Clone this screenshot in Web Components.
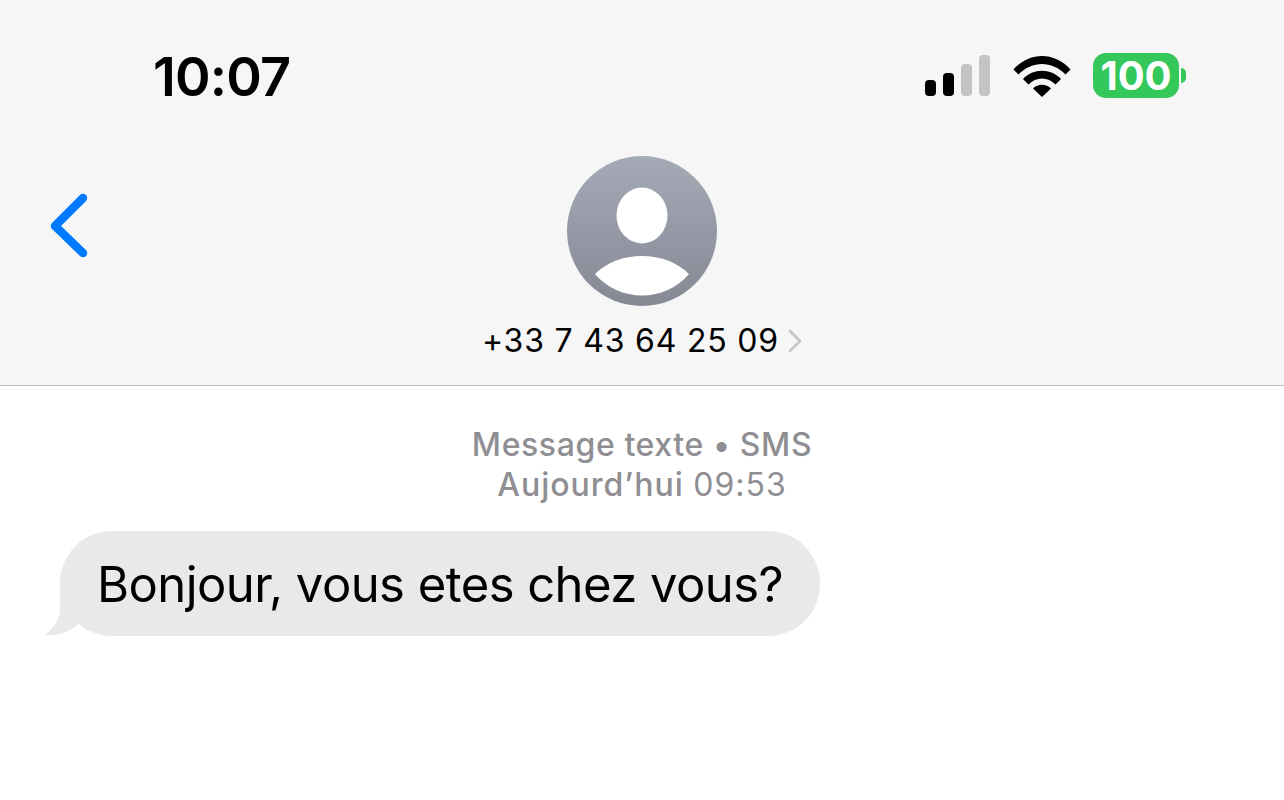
<!DOCTYPE html>
<html lang="fr">
<head>
<meta charset="utf-8">
<title>Messages</title>
<style>
  html, body { margin: 0; height: 100%; background: #fff; }
  body { font-family: Inter, "Liberation Sans", sans-serif; overflow: hidden; }
  thread-meta time { font-weight: 400; }
  thread-meta span + span { letter-spacing: 1px; }
</style>
</head>
<body>
<sms-screen>
  <status-bar slot="header" time="10:07" battery="100"></status-bar>
  <contact-nav slot="header" name="+33 7 43 64 25 09"></contact-nav>
  <thread-meta>
    <span>Message texte • SMS</span>
    <span>Aujourd’hui <time>09:53</time></span>
  </thread-meta>
  <message-bubble>Bonjour, vous etes chez vous?</message-bubble>
</sms-screen>

<script>
class SmsScreen extends HTMLElement {
    constructor() {
        super()
        this.attachShadow({ mode: 'open' })
        this.shadowRoot.innerHTML = `
<style>
  :host { display: flex; flex-direction: column; width: 1284px; height: 800px; }
  header { height: 385px; background: #f6f6f7; border-bottom: 1px solid #bdbdbf; display: flex; flex-direction: column; }
  main { flex: 1; padding-top: 39px; display: flex; flex-direction: column; }
</style>
<header><slot name="header"></slot></header>
<main><slot></slot></main>`
    }
}

class StatusBar extends HTMLElement {
    constructor() {
        super()
        this.attachShadow({ mode: 'open' })
        this.shadowRoot.innerHTML = `
<style>
  :host { display: flex; align-items: center; height: 156px; padding: 0 105px 0 153px; box-sizing: border-box; color: #000; }
  .time { font-size: 54px; font-weight: 600; letter-spacing: -0.8px; flex: 1; line-height: 60px; margin-top: -3px; }
  .icons { display: flex; align-items: center; margin-top: -5px; }
  .signal { display: block; margin-right: 23px; }
  .wifi { display: block; margin-right: 22px; }
  .battery { position: relative; display: flex; align-items: center; justify-content: center; width: 86px; height: 45px; border-radius: 13px; background: #34c759; color: #fff; font-size: 40px; font-weight: 700; letter-spacing: 0; line-height: 45px; }
  .battery::after { content: ''; position: absolute; left: 88px; top: 15px; width: 5px; height: 15px; background: #34c759; border-radius: 0 8px 8px 0; }
</style>
<div class="time"></div>
<div class="icons">
  <svg class="signal" width="66" height="42" viewBox="0 0 66 42">
    <rect x="1" y="25" width="11" height="16" rx="4" fill="#000"/>
    <rect x="19" y="18" width="11" height="23" rx="4" fill="#000"/>
    <rect x="37" y="9" width="11" height="32" rx="4" fill="#c4c4c5"/>
    <rect x="55" y="0" width="11" height="41" rx="4" fill="#c4c4c5"/>
  </svg>
  <svg class="wifi" width="58" height="42" viewBox="0 0 58 42">
    <path d="M0.5 14.5 C16.5 -3.5 41.5 -3.5 57.5 14.5 L52.5 19.5 C39 5.5 19 5.5 5.5 19.5 Z" fill="#000"/>
    <path d="M10 24 C20 13 38 13 48 24 L42.5 29.5 C35 21.5 23 21.5 15.5 29.5 Z" fill="#000"/>
    <path d="M20 33.5 C25 28.5 33 28.5 38 33.5 L29 42 Z" fill="#000"/>
  </svg>
  <div class="battery"></div>
</div>`
        this.shadowRoot.querySelector('.time').textContent = this.getAttribute('time')
        this.shadowRoot.querySelector('.battery').textContent = this.getAttribute('battery')
    }
}

class ContactNav extends HTMLElement {
    constructor() {
        super()
        this.attachShadow({ mode: 'open' })
        this.shadowRoot.innerHTML = `
<style>
  :host { display: grid; grid-template-columns: 1fr auto 1fr; align-items: start; }
  .back { display: block; margin: 37px 0 0 48px; }
  .contact { display: flex; flex-direction: column; align-items: center; }
  .avatar { display: block; }
  .name { display: flex; align-items: center; margin-top: 16px; font-size: 32px; line-height: 38px; color: #000; white-space: nowrap; letter-spacing: 0.8px; }
  .name svg { margin-left: 9px; }
</style>
<svg class="back" width="42" height="66" viewBox="0 0 42 66">
  <path d="M35 5 L7 33 L35 60" fill="none" stroke="#007aff" stroke-width="8.5" stroke-linecap="round" stroke-linejoin="round"/>
</svg>
<div class="contact">
  <svg class="avatar" width="150" height="150" viewBox="0 0 150 150">
    <defs>
      <linearGradient id="avatarFill" x1="0" y1="0" x2="0" y2="1">
        <stop offset="0" stop-color="#a5aab7"/>
        <stop offset="1" stop-color="#858994"/>
      </linearGradient>
    </defs>
    <circle cx="75" cy="75" r="75" fill="url(#avatarFill)"/>
    <ellipse cx="75" cy="59.5" rx="25.5" ry="28" fill="#fff"/>
    <path d="M28 118 C40 106 57 100 75 100 C93 100 110 106 122 118 C110 132 93 139.5 75 139.5 C57 139.5 40 132 28 118 Z" fill="#fff"/>
  </svg>
  <div class="name"><span></span><svg width="14" height="26" viewBox="0 0 14 26"><path d="M2 3 L12 13 L2 23" fill="none" stroke="#c5c5c7" stroke-width="2.6" stroke-linecap="round" stroke-linejoin="round"/></svg></div>
</div>
<div></div>`
        this.shadowRoot.querySelector('.name span').textContent = this.getAttribute('name')
    }
}

class ThreadMeta extends HTMLElement {
    constructor() {
        super()
        this.attachShadow({ mode: 'open' })
        this.shadowRoot.innerHTML = `
<style>
  :host { display: flex; flex-direction: column; align-items: center; font-size: 32px; line-height: 40px; color: #8e8e93; font-weight: 500; letter-spacing: 0.6px; }
  ::slotted(span) { display: block; white-space: nowrap; }
</style>
<slot></slot>`
    }
}

class MessageBubble extends HTMLElement {
    constructor() {
        super()
        this.attachShadow({ mode: 'open' })
        this.shadowRoot.innerHTML = `
<style>
  :host { display: flex; margin: 26px 0 0 60px; }
  .bubble { position: relative; box-sizing: border-box; height: 105px; padding: 2px 37px 0; display: flex; align-items: center; border-radius: 52px; background: #e9e9eb; color: #000; font-size: 49px; letter-spacing: -0.56px; white-space: nowrap; }
  .tail { position: absolute; left: -16px; bottom: 0; display: block; }
</style>
<div class="bubble">
  <svg class="tail" width="50" height="50" viewBox="0 0 50 50"><path d="M16 0 L16 24 C16 34 8 45 0 49 C10 50 24 48 34 38 L40 20 Z" fill="#e9e9eb"/></svg>
  <span><slot></slot></span>
</div>`
    }
}

customElements.define('sms-screen', SmsScreen)
customElements.define('status-bar', StatusBar)
customElements.define('contact-nav', ContactNav)
customElements.define('thread-meta', ThreadMeta)
customElements.define('message-bubble', MessageBubble)
</script>
</body>
</html>
